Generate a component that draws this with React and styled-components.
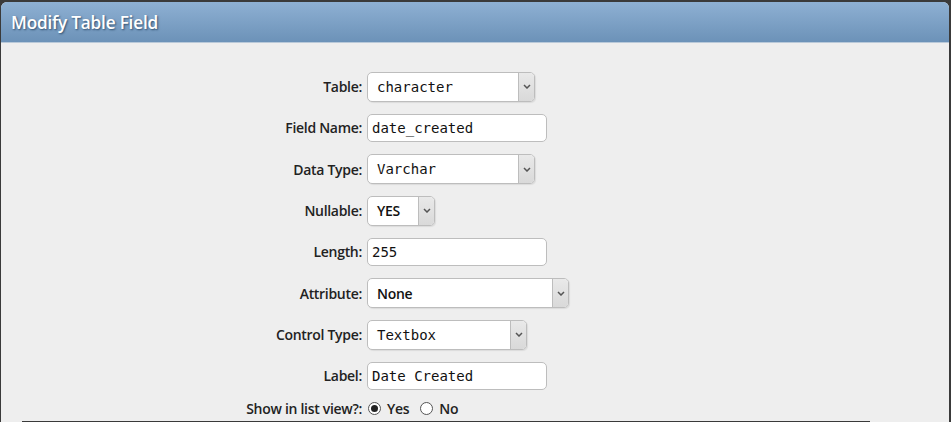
import React from "react";
import styled, { createGlobalStyle } from "styled-components";

const Global = createGlobalStyle`
  html, body { margin: 0; padding: 0; background: #3a3a3a; }
  body { overflow: hidden; }
`;

// outer panel with the blue title bar
const Panel = styled.div`
  margin: 2px 2px 0 1px;
  height: 420px;
  background: #eeeeee;
  border-radius: 6px 6px 0 0;
  overflow: hidden;
  font-family: "Open Sans", "Liberation Sans", sans-serif;
`;
const Header = styled.div`
  height: 40px;
  background-image: linear-gradient(#8eb0d3, #6c92b8);
  border-bottom: 1px solid #b9c9d9;
  display: flex;
  align-items: center;
  padding-left: 10px;
`;
const Title = styled.h1`
  margin: 0;
  font-size: 17.2px;
  font-weight: 600;
  color: #fff;
  letter-spacing: -0.2px;
  text-shadow: 1px 1px 2px #2f4f6f;
`;
const Form = styled.div`
  display: grid;
  grid-template-columns: 361px 1fr;
  grid-template-rows: repeat(8, 41.33px) 24px;
  column-gap: 5px;
  align-items: center;
  padding-top: 23px;
`;
const Label = styled.label`
  justify-self: end;
  font-size: 14px;
  font-weight: 600;
  color: #222;
  letter-spacing: -0.3px;
`;
const TextInput = styled.div`
  box-sizing: border-box;
  width: ${(p) => p.w}px;
  height: 28px;
  background: #fff;
  border: 1px solid #bdbdbd;
  border-radius: 5px;
  padding-left: 4px;
  display: flex;
  align-items: center;
  font-family: "DejaVu Sans Mono", "Liberation Mono", monospace;
  font-size: 14px;
  color: #111;
`;
const Select = styled.div`
  box-sizing: border-box;
  width: ${(p) => p.w}px;
  height: 30px;
  background: #fff;
  border: 1px solid #bdbdbd;
  border-radius: 5px;
  display: flex;
  overflow: hidden;
  box-shadow: 1px 1px 1px rgba(0, 0, 0, 0.08);
`;
const SelectValue = styled.div`
  flex: 1;
  display: flex;
  align-items: center;
  padding-left: 9px;
  font-family: ${(p) =>
    p.mono ? `"DejaVu Sans Mono", "Liberation Mono", monospace` : `"Open Sans", "Liberation Sans", sans-serif`};
  font-size: 14px;
  font-weight: ${(p) => (p.mono ? 400 : 600)};
  letter-spacing: ${(p) => (p.mono ? "0" : "-0.3px")};
  color: #111;
`;
const SelectButton = styled.div`
  width: 15px;
  border-left: 1px solid #bdbdbd;
  background: linear-gradient(#e9e9e9, #d9d9d9);
  display: flex;
  align-items: center;
  justify-content: center;
`;
const RadioRow = styled.div`
  display: flex;
  align-items: center;
  font-size: 14px;
  font-weight: 600;
  letter-spacing: -0.3px;
  color: #222;
`;
const Radio = styled.span`
  box-sizing: border-box;
  width: 13px;
  height: 13px;
  border-radius: 50%;
  border: 1px solid #555;
  background: #fff;
  margin: 0 6px 0 1px;
  display: flex;
  align-items: center;
  justify-content: center;
  &::after {
    content: "";
    width: 7px;
    height: 7px;
    border-radius: 50%;
    background: ${(p) => (p.checked ? "#222" : "transparent")};
  }
`;
const RadioText = styled.span`
  margin-right: 10px;
`;
const Rule = styled.div`
  margin: 0 0 0 21px;
  width: 848px;
  border-top: 3px solid #3a3a3a;
`;

const Chevron = () => (
  <svg width="8" height="5" viewBox="0 0 8 5">
    <path d="M1 1 L4 4 L7 1" stroke="#555" strokeWidth="1.5" fill="none" />
  </svg>
);

const Dropdown = ({ w, value, mono = true }) => (
  <Select w={w}>
    <SelectValue mono={mono}>{value}</SelectValue>
    <SelectButton>
      <Chevron />
    </SelectButton>
  </Select>
);

const Text = ({ w = 180, value }) => <TextInput w={w}>{value}</TextInput>;

export default function App() {
  return (
    <>
      <Global />
      <Panel>
        <Header>
          <Title>Modify Table Field</Title>
        </Header>
        <Form>
          <Label>Table:</Label>
          <Dropdown w={168} value="character" />
          <Label>Field Name:</Label>
          <Text value="date_created" />
          <Label>Data Type:</Label>
          <Dropdown w={168} value="Varchar" />
          <Label>Nullable:</Label>
          <Dropdown w={68} value="YES" mono={false} />
          <Label>Length:</Label>
          <Text value="255" />
          <Label>Attribute:</Label>
          <Dropdown w={202} value="None" mono={false} />
          <Label>Control Type:</Label>
          <Dropdown w={160} value="Textbox" />
          <Label>Label:</Label>
          <Text value="Date Created" />
          <Label>Show in list view?:</Label>
          <RadioRow>
            <Radio checked />
            <RadioText>Yes</RadioText>
            <Radio />
            <RadioText>No</RadioText>
          </RadioRow>
        </Form>
        <Rule />
      </Panel>
    </>
  );
}
